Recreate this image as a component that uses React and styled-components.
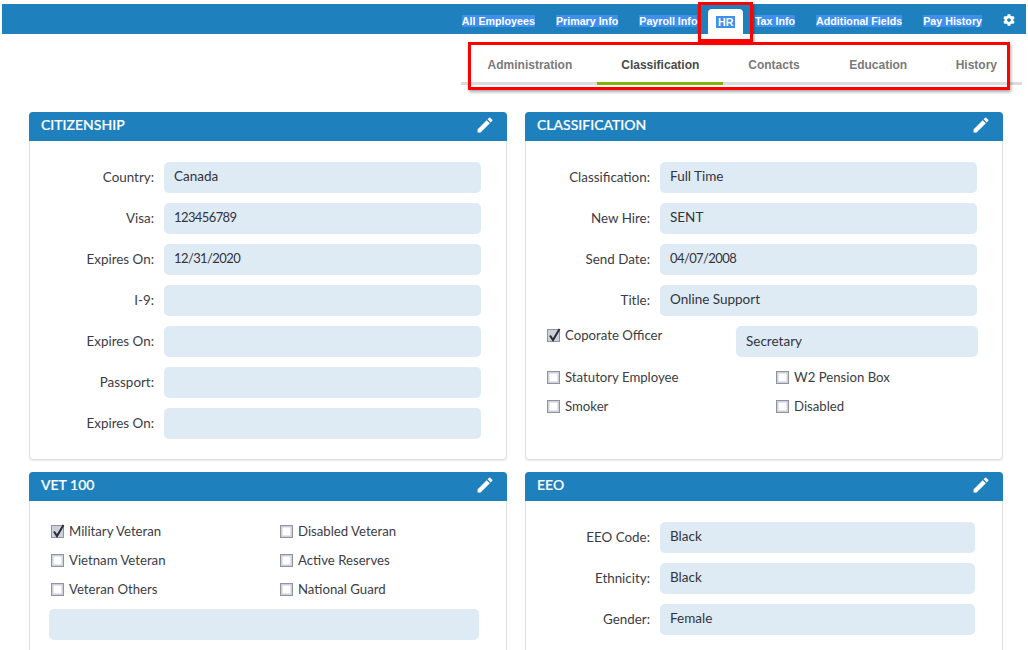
import React from "react";
import styled, { createGlobalStyle } from 'styled-components';
import { FaCog } from 'react-icons/fa';
import { MdEdit } from 'react-icons/md';

const GlobalStyle = createGlobalStyle`
  html, body {
    margin: 0;
    padding: 0;
    height: 650px;
    overflow: hidden;
    background: #fff;
  }
  body {
    font-family: "Lato", "Noto Sans", sans-serif;
  }
`;

const Page = styled.div`
  position: relative;
  width: 1028px;
  height: 650px;
  overflow: hidden;
  padding-top: 4px;
  box-sizing: border-box;
`;

const TopBar = styled.nav`
  display: flex;
  justify-content: flex-end;
  align-items: flex-end;
  height: 30px;
  margin: 0 2px;
  background: #1e81bd;
  padding-right: 11px;
  font: bold 10.7px "Liberation Sans", Arial, sans-serif;
`;

const TopItem = styled.a`
  display: flex;
  align-items: center;
  justify-content: center;
  box-sizing: border-box;
  height: ${p => (p.$active ? '25px' : '30px')};
  padding: ${p => (p.$active ? '0 8px' : '4px 10.5px 0')};
  margin: ${p => (p.$active ? '0 1px 0 0' : '0')};
  color: #fff;
  background: ${p => (p.$active ? '#fff' : 'transparent')};
  border-radius: 4px 4px 0 0;

  span {
    background: #3f8fee;
    line-height: 12px;
    padding: ${p => (p.$active ? '0 2px' : '0')};
  }
`;

const GearItem = styled.a`
  display: flex;
  align-items: center;
  height: 30px;
  margin-left: 10.5px;
  padding-top: 1px;
  box-sizing: border-box;
  color: #fff;
  font-size: 12px;
`;

const SubTabs = styled.div`
  display: flex;
  justify-content: flex-end;
  align-items: flex-end;
  height: 48px;
  margin: 0 6px 27px 461px;
  border-bottom: 3px solid #dcdcdc;
`;

const SubTab = styled.a`
  position: relative;
  top: 3px;
  height: 35px;
  padding: 0 ${p => p.$right || 25}px 0 ${p => p.$left || 25}px;
  font: bold 12px/30px "Liberation Sans", Arial, sans-serif;
  color: ${p => (p.$active ? '#4a4a4a' : '#7a7a7a')};
  border-bottom: 3px solid ${p => (p.$active ? '#85b200' : 'transparent')};
  box-sizing: border-box;
`;

const Grid = styled.div`
  display: grid;
  grid-template-columns: 478px 478px;
  column-gap: 18px;
  row-gap: 12px;
  padding-left: 29px;
`;

const Card = styled.section`
  height: ${p => p.$height}px;
  box-sizing: border-box;
  border: 1px solid #e0e0e0;
  border-radius: 4px;
  box-shadow: 0 1px 1px rgba(0, 0, 0, 0.08);
  background: #fff;
`;

const CardHead = styled.header`
  display: flex;
  align-items: center;
  justify-content: space-between;
  height: 29px;
  margin: -1px -1px 0;
  padding: 0 12px 4px 12px;
  box-sizing: border-box;
  background: #1e81bd;
  border-radius: 4px 4px 0 0;
  color: #fff;
  font: 500 14px "Lato", sans-serif;
  -webkit-text-stroke: 0.2px #fff;
  svg {
    font-size: 20px;
    margin-top: 1px;
  }
`;

const CardBody = styled.div`
  display: flex;
  flex-direction: column;
  gap: 10px;
  padding: ${p => p.$pad || '21px 25px 0 0'};
`;

const Row = styled.div`
  display: flex;
  align-items: center;
  gap: 10px;
`;

const Label = styled.label`
  width: 124px;
  padding-bottom: 2px;
  text-align: right;
  font-size: 13.4px;
  color: #3c3c46;
`;

const Field = styled.div`
  flex: ${p => (p.$fixed ? `0 0 ${p.$fixed}px` : '1 1 auto')};
  height: 31px;
  box-sizing: border-box;
  padding: 0 10px ${p => (p.$low ? '1px' : '3px')};
  display: flex;
  align-items: center;
  background: #deebf5;
  border-radius: 5px;
  font-size: ${p => (p.$digits ? '13px' : '13.5px')};
  letter-spacing: ${p => (p.$digits ? '-0.6px' : 'normal')};
  color: #33333d;
`;

const CheckRows = styled.div`
  display: grid;
  grid-template-columns: ${p => p.$cols};
  row-gap: 9px;
`;

const Check = styled.div`
  display: flex;
  align-items: center;
  gap: 5px;
  height: 20px;
  font-size: 13.2px;
  color: #3c3c46;
`;

const Box = styled.span`
  width: 13px;
  height: 13px;
  box-sizing: border-box;
  border: 1px solid #9092a3;
  background: ${p => (p.$on ? '#cfd0db' : '#fff')};
  box-shadow: inset 0 0 0 1.5px #cfd0da;
  position: relative;
  margin-top: 1px;
  svg {
    position: absolute;
    left: -1px;
    top: -3px;
  }
`;

const Marker = styled.div`
  position: absolute;
  left: ${p => p.$x}px;
  top: ${p => p.$y}px;
  width: ${p => p.$w}px;
  height: ${p => p.$h}px;
  box-sizing: border-box;
  border: 3px solid #f00;
  box-shadow: 1px 2px 3px rgba(0, 0, 0, 0.35);
`;

const CheckItem = ({ on, children }) => (
  <Check>
    <Box $on={on}>
      {on && (
        <svg width="15" height="16" viewBox="0 0 15 16">
          <path d="M3 8.5 L6 13 L12.5 2" fill="none" stroke="#2c2c36" strokeWidth="2" />
        </svg>
      )}
    </Box>
    {children}
  </Check>
);

const FormRow = ({ label, value, width, digits }) => (
  <Row>
    <Label>{label}</Label>
    <Field $fixed={width} $digits={digits}>{value}</Field>
  </Row>
);

const Panel = ({ title, height, bodyPad, children }) => (
  <Card $height={height}>
    <CardHead>
      {title}
      <MdEdit />
    </CardHead>
    <CardBody $pad={bodyPad}>{children}</CardBody>
  </Card>
);

const topItems = ['All Employees', 'Primary Info', 'Payroll Info', 'HR', 'Tax Info', 'Additional Fields', 'Pay History'];

const OfficerRow = styled.div`
  display: flex;
  justify-content: space-between;
  padding-left: 21px;
  margin-right: -1px;
  height: 31px;
`;

const OfficerCheck = styled.div`
  margin-top: -1px;
`;

const CheckGroup = styled.div`
  padding-left: 21px;
`;

const VetGroup = styled.div`
  padding: 0 2px;
`;

export default function App() {
  return (
    <Page>
      <GlobalStyle />
      <TopBar>
        {topItems.map(item => (
          <TopItem key={item} $active={item === 'HR'}>
            <span>{item}</span>
          </TopItem>
        ))}
        <GearItem><FaCog /></GearItem>
      </TopBar>
      <SubTabs>
        <SubTab>Administration</SubTab>
        <SubTab $active $left={24} $right={24}>Classification</SubTab>
        <SubTab $right={24.5}>Contacts</SubTab>
        <SubTab $right={24}>Education</SubTab>
        <SubTab $left={24.5}>History</SubTab>
      </SubTabs>
      <Grid>
        <Panel title="CITIZENSHIP" height={348}>
          <FormRow label="Country:" value="Canada" />
          <FormRow label="Visa:" value="123456789" digits />
          <FormRow label="Expires On:" value="12/31/2020" digits />
          <FormRow label="I-9:" />
          <FormRow label="Expires On:" />
          <FormRow label="Passport:" />
          <FormRow label="Expires On:" />
        </Panel>
        <Panel title="CLASSIFICATION" height={348}>
          <FormRow label="Classification:" value="Full Time" />
          <FormRow label="New Hire:" value="SENT" />
          <FormRow label="Send Date:" value="04/07/2008" digits />
          <FormRow label="Title:" value="Online Support" />
          <OfficerRow>
            <OfficerCheck>
              <CheckItem on>Coporate Officer</CheckItem>
            </OfficerCheck>
            <Field $fixed={242} $low>Secretary</Field>
          </OfficerRow>
          <CheckGroup>
            <CheckRows $cols="229px 1fr">
              <CheckItem>Statutory Employee</CheckItem>
              <CheckItem>W2 Pension Box</CheckItem>
              <CheckItem>Smoker</CheckItem>
              <CheckItem>Disabled</CheckItem>
            </CheckRows>
          </CheckGroup>
        </Panel>
        <Panel title="VET 100" height={200} bodyPad="20px 27px 0 19px">
          <VetGroup>
            <CheckRows $cols="229px 1fr">
              <CheckItem on>Military Veteran</CheckItem>
              <CheckItem>Disabled Veteran</CheckItem>
              <CheckItem>Vietnam Veteran</CheckItem>
              <CheckItem>Active Reserves</CheckItem>
              <CheckItem>Veteran Others</CheckItem>
              <CheckItem>National Guard</CheckItem>
            </CheckRows>
          </VetGroup>
          <Field />
        </Panel>
        <Panel title="EEO" height={200}>
          <FormRow label="EEO Code:" value="Black" width={315} />
          <FormRow label="Ethnicity:" value="Black" width={315} />
          <FormRow label="Gender:" value="Female" width={315} />
        </Panel>
      </Grid>
      <Marker $x={698} $y={2} $w={55} $h={40} />
      <Marker $x={468} $y={42} $w={542} $h={48} />
    </Page>
  );
}
